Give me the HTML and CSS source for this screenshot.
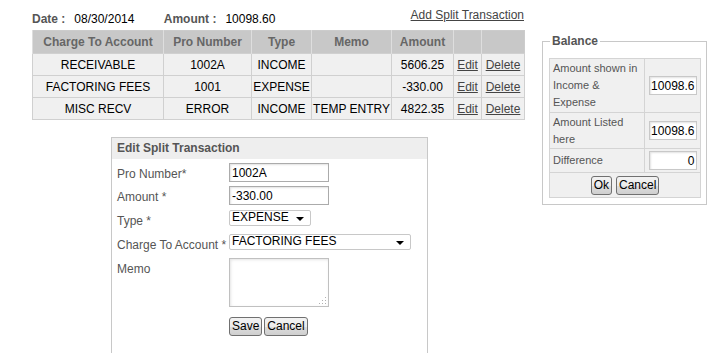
FILE: index.html
```html
<!DOCTYPE html>
<html lang="en">
<head>
    <meta charset="UTF-8">
    <title>Split Transaction</title>
    <link rel="stylesheet" href="styles.css">
</head>
<body>
    <div class="page">
        <div class="main">
            <div class="topline">
                <div class="info">
                    <span class="lbl">Date :</span><span class="val">08/30/2014</span>
                    <span class="lbl amt">Amount :</span><span class="val">10098.60</span>
                </div>
                <a href="#" class="addlink">Add Split Transaction</a>
            </div>
            <table class="grid">
                <colgroup>
                    <col style="width:131px"><col style="width:88px"><col style="width:60px"><col style="width:80px"><col style="width:62px"><col style="width:28px"><col style="width:43px">
                </colgroup>
                <thead>
                    <tr>
                        <th>Charge To Account</th>
                        <th>Pro Number</th>
                        <th>Type</th>
                        <th>Memo</th>
                        <th>Amount</th>
                        <th></th>
                        <th></th>
                    </tr>
                </thead>
                <tbody>
                    <tr>
                        <td>RECEIVABLE</td><td>1002A</td><td>INCOME</td><td></td><td>5606.25</td>
                        <td><a href="#">Edit</a></td><td><a href="#">Delete</a></td>
                    </tr>
                    <tr>
                        <td>FACTORING FEES</td><td>1001</td><td>EXPENSE</td><td></td><td>-330.00</td>
                        <td><a href="#">Edit</a></td><td><a href="#">Delete</a></td>
                    </tr>
                    <tr>
                        <td>MISC RECV</td><td>ERROR</td><td>INCOME</td><td>TEMP ENTRY</td><td>4822.35</td>
                        <td><a href="#">Edit</a></td><td><a href="#">Delete</a></td>
                    </tr>
                </tbody>
            </table>

            <div class="editbox">
                <div class="edithead">Edit Split Transaction</div>
                <div class="form">
                    <label>Pro Number*</label>
                    <div><input type="text" class="txt" value="1002A"></div>
                    <label>Amount *</label>
                    <div><input type="text" class="txt" value="-330.00"></div>
                    <label>Type *</label>
                    <div><div class="sel sel-type">EXPENSE<span class="arrow"></span></div></div>
                    <label>Charge To Account *</label>
                    <div><div class="sel sel-acct">FACTORING FEES<span class="arrow"></span></div></div>
                    <label>Memo</label>
                    <div><div class="memo"><span class="grip"></span></div></div>
                    <span></span>
                    <div class="btns"><button class="btn">Save</button><button class="btn">Cancel</button></div>
                </div>
            </div>
        </div>

        <fieldset class="balance">
            <legend>Balance</legend>
            <table class="baltable">
                <colgroup><col style="width:95px"><col style="width:56px"></colgroup>
                <tr class="r1">
                    <td class="bl">Amount shown in<br>Income &amp;<br>Expense</td>
                    <td class="bv"><input type="text" class="num" value="10098.6"></td>
                </tr>
                <tr class="r2">
                    <td class="bl">Amount Listed<br>here</td>
                    <td class="bv"><input type="text" class="num" value="10098.6"></td>
                </tr>
                <tr class="r3">
                    <td class="bl">Difference</td>
                    <td class="bv"><input type="text" class="num" value="0"></td>
                </tr>
                <tr class="r4">
                    <td colspan="2" class="bb"><button class="btn">Ok</button><button class="btn">Cancel</button></td>
                </tr>
            </table>
        </fieldset>
    </div>
</body>
</html>
```

FILE: styles.css
```css
body {
    margin: 0;
    font-family: "Liberation Sans", Arial, sans-serif;
    font-size: 12px;
    color: #000;
    background: #fff;
}
.page {
    display: flex;
    align-items: flex-start;
    padding: 6px 0 0 32px;
}
.main {
    width: 492px;
}
.topline {
    display: flex;
    justify-content: space-between;
    align-items: flex-start;
    height: 24px;
}
.info {
    padding-top: 6px;
    line-height: 14px;
}
.lbl {
    font-weight: bold;
    color: #555;
    margin-right: 9px;
}
.lbl.amt {
    margin-left: 26px;
}
.val {
    color: #000;
}
.addlink {
    color: #444;
    text-decoration: underline;
    line-height: 14px;
    padding-top: 2px;
}
.grid {
    border-collapse: collapse;
    table-layout: fixed;
    width: 492px;
    border: 1px solid #ccc;
}
.grid th {
    background: #c8c8c8;
    color: #666;
    font-weight: bold;
    height: 22px;
    padding: 0;
    border-left: 1px solid #dedede;
    font-size: 12px;
}
.grid td {
    background: #f0f0f0;
    border: 1px solid #d0d0d0;
    text-align: center;
    height: 21px;
    padding: 0;
}
.grid a {
    color: #444;
}
.editbox {
    margin: 17px 0 0 79px;
    width: 315px;
    height: 220px;
    border: 1px solid #c8c8c8;
    border-bottom: none;
}
.edithead {
    background: #eeeeee;
    font-weight: bold;
    color: #555;
    height: 21px;
    line-height: 20px;
    padding-left: 5px;
}
.form {
    display: grid;
    grid-template-columns: 112px auto;
    grid-template-rows: 23px 24px 24px 24px 58px auto;
    padding: 4px 0 0 5px;
}
.form label {
    color: #555;
    padding-top: 4px;
    line-height: 14px;
}
.txt {
    box-sizing: border-box;
    width: 100px;
    height: 19px;
    margin: 0;
    padding: 0 2px;
    border: 1px solid #ababab;
    box-shadow: inset 1px 1px 2px #e2e2e2;
    font-family: "Liberation Sans", Arial, sans-serif;
    font-size: 12px;
    color: #000;
    outline: none;
}
.sel {
    position: relative;
    box-sizing: border-box;
    height: 16px;
    border: 1px solid #c8c8c8;
    border-radius: 2px;
    background: #fff;
    line-height: 13px;
    padding-left: 2px;
    font-size: 12px;
}
.sel-type {
    width: 82px;
}
.sel-acct {
    width: 182px;
}
.arrow {
    position: absolute;
    right: 6px;
    top: 6px;
    width: 0;
    height: 0;
    border-left: 4px solid transparent;
    border-right: 4px solid transparent;
    border-top: 4px solid #000;
}
.memo {
    position: relative;
    box-sizing: border-box;
    width: 100px;
    height: 49px;
    border: 1px solid #c0c0c0;
    box-shadow: inset 1px 1px 3px #e4e4e4;
}
.grip {
    position: absolute;
    right: 2px;
    bottom: 2px;
    width: 8px;
    height: 8px;
    background-image: radial-gradient(#b0b0b0 40%, transparent 45%);
    background-size: 3px 3px;
    clip-path: polygon(100% 0, 100% 100%, 0 100%);
}
.btns {
    display: flex;
    gap: 2px;
    padding-top: 1px;
}
.btn {
    height: 19px;
    padding: 0 2px;
    margin: 0;
    border: 1px solid #707070;
    border-radius: 3px;
    background: linear-gradient(#f2f2f2, #ebebeb 50%, #dddddd 51%, #cfcfcf);
    font-family: "Liberation Sans", Arial, sans-serif;
    font-size: 12px;
    color: #000;
    line-height: 15px;
}
.balance {
    margin: 29px 0 0 18px;
    width: 164px;
    box-sizing: border-box;
    height: 170px;
    border: 1px solid #c8c8c8;
    border-radius: 0;
    padding: 10px 5px 0 6px;
}
.balance legend {
    font-weight: bold;
    color: #555;
    padding: 0 2px;
    margin-left: 1px;
    line-height: 13px;
}
.baltable {
    border-collapse: collapse;
    table-layout: fixed;
    width: 151px;
    border: 1px solid #c8c8c8;
    background: #f0f0f0;
}
.baltable td {
    border: 1px solid #d4d4d4;
    padding: 0;
}
.bl {
    color: #555;
    font-size: 11px;
    padding-left: 3px !important;
    line-height: 17px;
    vertical-align: middle;
    white-space: nowrap;
}
.bv {
    text-align: center;
}
.r1 td {
    height: 53px;
}
.r2 td {
    height: 35px;
}
.r3 td {
    height: 23px;
}
.r4 td {
    height: 24px;
}
.bb {
    text-align: center;
}
.bb .btn {
    margin: 0 2px;
}
.num {
    box-sizing: border-box;
    width: 48px;
    height: 19px;
    margin: 0;
    padding: 0 1px;
    border: 1px solid #c8c8c8;
    box-shadow: inset 1px 1px 2px #e2e2e2;
    text-align: right;
    font-family: "Liberation Sans", Arial, sans-serif;
    font-size: 12px;
    outline: none;
}
```
